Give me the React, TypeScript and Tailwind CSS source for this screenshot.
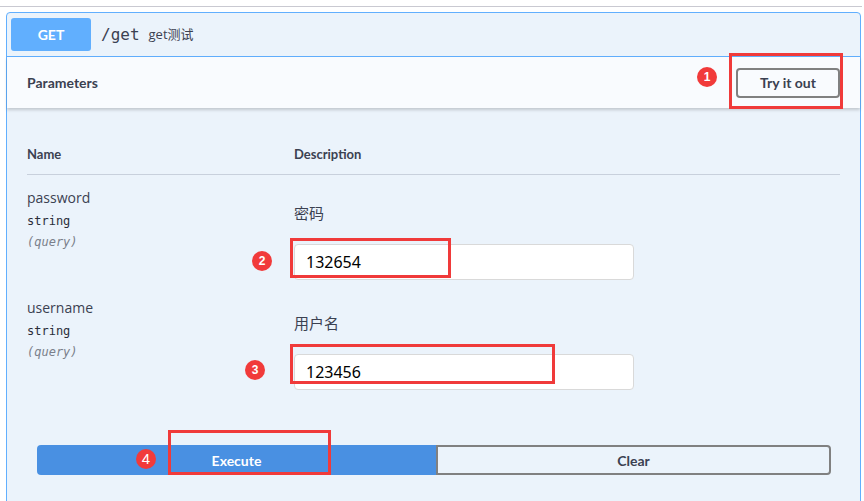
import React from "react";

function Badge({ n, x, y, bold = true }: { n: string; x: string; y: string; bold?: boolean }) {
  return (
    <div
      className={`absolute flex h-[20px] w-[20px] items-center justify-center rounded-full bg-[#f13a3a] text-white ${x} ${y} ${
        bold ? "text-[12px] font-bold" : "text-[15px] font-normal"
      } font-['Liberation_Sans',sans-serif]`}
    >
      {n}
    </div>
  );
}

function ParamRow({ name, desc, value, pt }: { name: string; desc: string; value: string; pt: string }) {
  return (
    <div className={`flex ${pt}`}>
      <div className="w-[267px] shrink-0">
        <div className="text-[14px] leading-[20px] text-[#3b4151] font-['Open_Sans',sans-serif]">{name}</div>
        <div className="mt-[5px] text-[12px] leading-[16px] font-normal text-[#2a2f3a] font-['DejaVu_Sans_Mono',monospace]">
          string
        </div>
        <div className="mt-[5px] text-[12px] leading-[16px] italic text-[#7a7f8a] font-['DejaVu_Sans_Mono',monospace]">
          (query)
        </div>
      </div>
      <div>
        <div className="mt-[15px] text-[15px] leading-[20px] text-[#3b4151] font-['Noto_Sans_CJK_SC',sans-serif]">{desc}</div>
        <div className="mt-[21px] flex h-[36px] w-[340px] items-center rounded-[4px] border border-[#d9d9d9] bg-white pl-[11px] text-[16px] text-black font-['Noto_Sans','Noto_Sans_CJK_SC',sans-serif]">
          {value}
        </div>
      </div>
    </div>
  );
}

export default function App() {
  return (
    <div className="relative h-[501px] w-[864px] overflow-hidden bg-white text-[#3b4151] font-['Open_Sans','Noto_Sans_CJK_SC',sans-serif]">
      <div className="h-[6px]" />
      <div className="h-px w-[862px] bg-[#c9c9d1]" />
      <div className="ml-[6px] mt-[5px] h-[600px] w-[855px] rounded-[4px] border border-[#61affe] bg-[#ebf3fb]">
        <div className="flex h-[44px] items-center border-b border-[#61affe] pl-[4px]">
          <div className="flex h-[33px] w-[80px] items-center justify-center rounded-[3px] bg-[#61affe] text-[14px] font-bold text-white font-['Lato',sans-serif]">
            GET
          </div>
          <div className="ml-[10px] text-[16px] text-[#3b4151] font-['DejaVu_Sans_Mono',monospace]">/get</div>
          <div className="ml-[9px] text-[13px] text-[#3b4151] font-['Open_Sans','Noto_Sans_CJK_SC',sans-serif]">get测试</div>
        </div>
        <div className="flex h-[51px] items-center justify-between bg-[#f9fbfe] px-[20px] shadow-[0_2px_3px_rgba(0,0,0,0.18)]">
          <div className="text-[14px] font-bold text-[#3b4151] font-['Lato',sans-serif]">Parameters</div>
          <div className="flex h-[30px] w-[104px] items-center justify-center rounded-[4px] border-2 border-[#808080] text-[14px] font-bold text-[#3b4151] font-['Lato',sans-serif]">
            Try it out
          </div>
        </div>
        <div className="px-[20px] pt-[27px]">
          <div className="flex h-[40px] items-center border-b border-[#c8d0dc] text-[13px] font-bold text-[#3b4151] font-['Lato',sans-serif]">
            <div className="w-[267px]">Name</div>
            <div>Description</div>
          </div>
          <ParamRow name="password" desc="密码" value="132654" pt="pt-[13px]" />
          <ParamRow name="username" desc="用户名" value="123456" pt="pt-[18px]" />
          <div className="ml-[10px] mt-[55px] flex h-[30px] w-[794px]">
            <div className="flex w-[399px] items-center justify-center rounded-l-[4px] bg-[#4990e2] text-[14px] font-bold text-white font-['Lato',sans-serif]">
              Execute
            </div>
            <div className="flex flex-1 items-center justify-center rounded-r-[4px] border-2 border-[#808080] text-[14px] font-bold text-[#3b4151] font-['Lato',sans-serif]">
              Clear
            </div>
          </div>
        </div>
      </div>

      {/* annotations */}
      <div className="absolute left-[729px] top-[53px] h-[56px] w-[114px] border-[3px] border-[#f03a3a]" />
      <div className="absolute left-[290px] top-[238px] h-[40px] w-[161px] border-[3px] border-[#f03a3a]" />
      <div className="absolute left-[290px] top-[344px] h-[40px] w-[265px] border-[3px] border-[#f03a3a]" />
      <div className="absolute left-[168px] top-[430px] h-[45px] w-[163px] border-[3px] border-[#f03a3a]" />
      <Badge n="1" x="left-[697px]" y="top-[67px]" />
      <Badge n="2" x="left-[252px]" y="top-[251px]" />
      <Badge n="3" x="left-[245px]" y="top-[360px]" />
      <Badge n="4" x="left-[136px]" y="top-[449px]" bold={false} />
    </div>
  );
}
